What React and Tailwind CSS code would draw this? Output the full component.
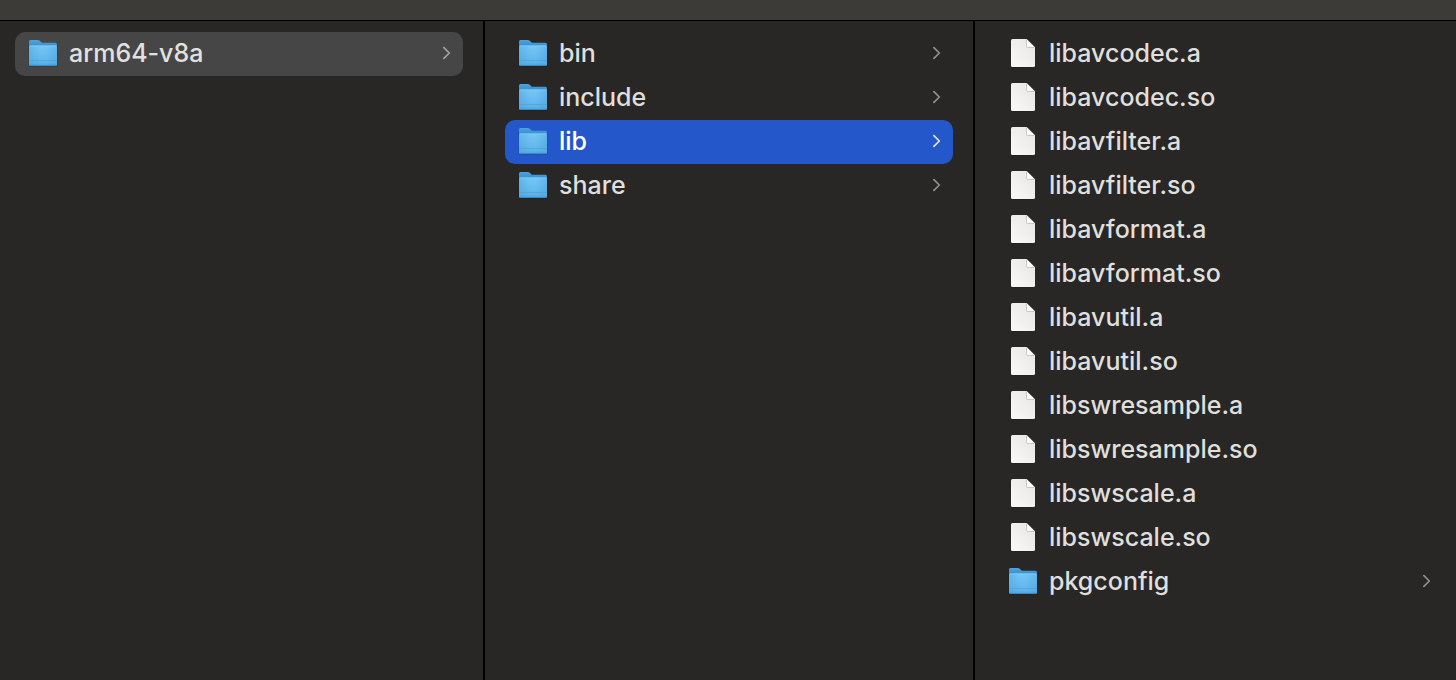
import React, { useState } from "react";

const columns = [
  {
    label: "Architectures",
    className: "pl-[15px] pr-5 border-r-2",
    selected: "arm64-v8a",
    selectedClass: "bg-[#464646] text-[#e1e1e0]",
    chevronClass: "text-[#a3a3a3]",
    items: ["arm64-v8a/"],
  },
  {
    label: "arm64-v8a",
    className: "px-5 border-r-2",
    selected: "lib",
    selectedClass: "bg-[#2458ca] text-white",
    chevronClass: "text-[#dfe6f7]",
    items: ["bin/", "include/", "lib/", "share/"],
  },
  {
    label: "lib",
    className: "pl-5 pr-[13px]",
    selected: "",
    selectedClass: "bg-[#2458ca] text-white",
    chevronClass: "text-[#dfe6f7]",
    items: [
      "libavcodec.a",
      "libavcodec.so",
      "libavfilter.a",
      "libavfilter.so",
      "libavformat.a",
      "libavformat.so",
      "libavutil.a",
      "libavutil.so",
      "libswresample.a",
      "libswresample.so",
      "libswscale.a",
      "libswscale.so",
      "pkgconfig/",
    ],
  },
];

function FolderIcon() {
  return (
    <svg width="28" height="30" viewBox="0 0 28 30" className="shrink-0 overflow-visible" aria-hidden="true">
      <rect x="-0.500" y="5" width="29" height="23.500" rx="1.500" fill="#000" opacity="0.2" />
      <path d="M0 3.500Q0 2 1.500 2H8.800Q9.800 2 10.500 2.600L12.300 4.200Q13 4.800 14 4.800H26.500Q28 4.800 28 6.300V26H0Z" fill="url(#folder-back)" />
      <path d="M0 8.800Q0 7.600 1.400 7.600H26.600Q28 7.600 28 8.800V26.400Q28 27.800 26.600 27.800H1.400Q0 27.800 0 26.400Z" fill="url(#folder-front)" />
      <path d="M0 8.800Q0 7.600 1.400 7.600H26.600Q28 7.600 28 8.800V26.400Q28 27.800 26.600 27.800H1.400Q0 27.800 0 26.400Z" fill="url(#folder-sides)" />
      <path d="M1 8H27" stroke="#83cdf5" strokeWidth="0.800" />
      <path d="M0 22.500H28" stroke="#4a9fd6" strokeWidth="1" opacity="0.6" />
      <path d="M0 25.500H28" stroke="#55abe0" strokeWidth="1" opacity="0.5" />
      <path d="M0.500 27.300H27.500" stroke="#398ac2" strokeWidth="1" />
    </svg>
  );
}

function FileIcon() {
  return (
    <svg width="28" height="30" viewBox="0 0 28 30" className="shrink-0 overflow-visible" aria-hidden="true">
      <path d="M2 3Q2 1 4 1H17.500L26 9.500V27.500Q26 29.500 24 29.500H4Q2 29.500 2 27.500Z" fill="#000" opacity="0.25" />
      <path d="M2 2.500Q2 1 3.500 1H17.500L26 9.300V27.500Q26 29 24.500 29H3.500Q2 29 2 27.500Z" fill="url(#file-page)" />
      <path d="M17.500 1V8.500Q17.500 9.500 18.500 9.500H26Z" fill="#fafafa" />
      <path d="M17.500 1.500V8.500Q17.500 9.500 18.500 9.500H25.500" fill="none" stroke="#bdbdbd" strokeWidth="0.800" />
    </svg>
  );
}

function Chevron({ className }) {
  return (
    <svg width="8" height="14" viewBox="0 0 8 14" className={`shrink-0 ${className}`} aria-hidden="true">
      <path d="M0.900 1.700L6.300 7L0.900 12.300" fill="none" stroke="currentColor" strokeWidth="1.700" strokeLinecap="round" strokeLinejoin="round" />
    </svg>
  );
}

function Row({ name, folder, selected, column, onSelect }) {
  return (
    <li>
      <button
        type="button"
        onClick={onSelect}
        aria-pressed={selected}
        className={`flex h-11 w-full items-center gap-3 rounded-[10px] pb-0.5 pl-3.5 pr-3 text-left ${
          selected ? column.selectedClass : "text-[#dfdfde]"
        }`}
      >
        {folder ? <FolderIcon /> : <FileIcon />}
        <span className="min-w-0 flex-1 truncate">{name}</span>
        {folder && <Chevron className={selected ? column.chevronClass : "text-[#90908f]"} />}
      </button>
    </li>
  );
}

function Column({ column }) {
  const [selected, setSelected] = useState(column.selected);
  return (
    <ul aria-label={column.label} className={`min-w-0 border-black pt-[11px] ${column.className}`}>
      {column.items.map((item) => {
        const folder = item.endsWith("/");
        const name = folder ? item.slice(0, -1) : item;
        return (
          <Row
            key={item}
            name={name}
            folder={folder}
            selected={selected === name}
            column={column}
            onSelect={() => setSelected(name)}
          />
        );
      })}
    </ul>
  );
}

export default function App() {
  return (
    <div className="flex min-h-screen flex-col bg-[#282725] font-['Inter',sans-serif] text-[25px] font-medium leading-8">
      <svg width="0" height="0" className="absolute" aria-hidden="true">
        <defs>
          <linearGradient id="folder-back" x1="0" y1="0" x2="0" y2="1">
            <stop offset="0" stopColor="#4ba3df" />
            <stop offset="0.25" stopColor="#3c8fce" />
            <stop offset="1" stopColor="#3c8fce" />
          </linearGradient>
          <linearGradient id="folder-front" x1="0" y1="0" x2="0" y2="1">
            <stop offset="0" stopColor="#74c6f6" />
            <stop offset="1" stopColor="#5bb1e8" />
          </linearGradient>
          <linearGradient id="folder-sides" x1="0" y1="0" x2="1" y2="0">
            <stop offset="0" stopColor="#3c92d2" stopOpacity="0.3" />
            <stop offset="0.4" stopColor="#3c92d2" stopOpacity="0" />
            <stop offset="0.6" stopColor="#3c92d2" stopOpacity="0" />
            <stop offset="1" stopColor="#3c92d2" stopOpacity="0.3" />
          </linearGradient>
          <linearGradient id="file-page" x1="0" y1="1" x2="1" y2="0">
            <stop offset="0" stopColor="#fafafa" />
            <stop offset="1" stopColor="#e4e4e4" />
          </linearGradient>
        </defs>
      </svg>
      <header className="h-[21px] border-b border-black bg-[#3c3b38]" />
      <main className="grid flex-1 grid-cols-[485fr_490fr_481fr]">
        {columns.map((column) => (
          <Column key={column.label} column={column} />
        ))}
      </main>
    </div>
  );
}
